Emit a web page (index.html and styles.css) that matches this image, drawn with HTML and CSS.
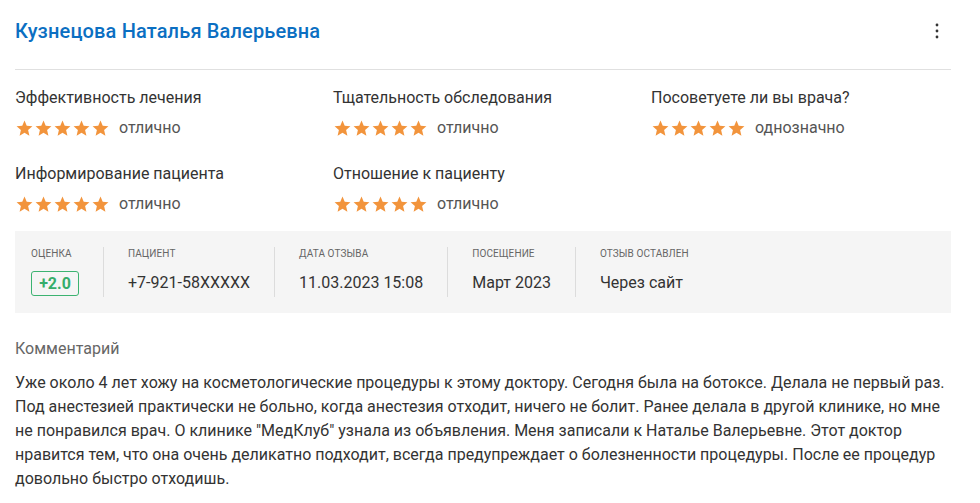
FILE: index.html
```html
<!DOCTYPE html>
<html lang="ru">
<head>
  <meta charset="utf-8">
  <title>Отзыв о враче</title>
  <link rel="stylesheet" href="styles.css">
</head>
<body>
  <svg width="0" height="0" class="defs">
    <defs>
      <symbol id="star" viewBox="0 0 24 24">
        <path d="M12 17.27L18.18 21l-1.64-7.03L22 9.24l-7.19-.61L12 2 9.19 8.63 2 9.24l5.46 4.73L5.82 21z"/>
      </symbol>
    </defs>
  </svg>

  <div class="review">
    <div class="reviewHeader">
      <a class="doctorName" href="#">Кузнецова Наталья Валерьевна</a>
      <button class="menuButton" aria-label="Меню">
        <svg width="4" height="16" viewBox="0 0 4 16"><circle cx="2" cy="2" r="1.4"/><circle cx="2" cy="8" r="1.4"/><circle cx="2" cy="14" r="1.4"/></svg>
      </button>
    </div>

    <div class="ratings">
      <div class="rating">
        <div class="ratingLabel">Эффективность лечения</div>
        <div class="ratingValue">
          <span class="stars"><svg><use href="#star"/></svg><svg><use href="#star"/></svg><svg><use href="#star"/></svg><svg><use href="#star"/></svg><svg><use href="#star"/></svg></span>
          отлично
        </div>
      </div>
      <div class="rating">
        <div class="ratingLabel">Тщательность обследования</div>
        <div class="ratingValue">
          <span class="stars"><svg><use href="#star"/></svg><svg><use href="#star"/></svg><svg><use href="#star"/></svg><svg><use href="#star"/></svg><svg><use href="#star"/></svg></span>
          отлично
        </div>
      </div>
      <div class="rating">
        <div class="ratingLabel">Посоветуете ли вы врача?</div>
        <div class="ratingValue">
          <span class="stars"><svg><use href="#star"/></svg><svg><use href="#star"/></svg><svg><use href="#star"/></svg><svg><use href="#star"/></svg><svg><use href="#star"/></svg></span>
          однозначно
        </div>
      </div>
      <div class="rating">
        <div class="ratingLabel">Информирование пациента</div>
        <div class="ratingValue">
          <span class="stars"><svg><use href="#star"/></svg><svg><use href="#star"/></svg><svg><use href="#star"/></svg><svg><use href="#star"/></svg><svg><use href="#star"/></svg></span>
          отлично
        </div>
      </div>
      <div class="rating">
        <div class="ratingLabel">Отношение к пациенту</div>
        <div class="ratingValue">
          <span class="stars"><svg><use href="#star"/></svg><svg><use href="#star"/></svg><svg><use href="#star"/></svg><svg><use href="#star"/></svg><svg><use href="#star"/></svg></span>
          отлично
        </div>
      </div>
    </div>

    <div class="details">
      <div class="detail">
        <div class="detailLabel">Оценка</div>
        <div class="score">+2.0</div>
      </div>
      <div class="detail">
        <div class="detailLabel">Пациент</div>
        <div class="detailValue">+7-921-58XXXXX</div>
      </div>
      <div class="detail">
        <div class="detailLabel">Дата отзыва</div>
        <div class="detailValue">11.03.2023 15:08</div>
      </div>
      <div class="detail">
        <div class="detailLabel">Посещение</div>
        <div class="detailValue">Март 2023</div>
      </div>
      <div class="detail">
        <div class="detailLabel">Отзыв оставлен</div>
        <div class="detailValue">Через сайт</div>
      </div>
    </div>

    <div class="commentLabel">Комментарий</div>
    <p class="commentText">Уже около 4 лет хожу на косметологические процедуры к этому доктору. Сегодня была на ботоксе. Делала не первый раз. Под анестезией практически не больно, когда анестезия отходит, ничего не болит. Ранее делала в другой клинике, но мне не понравился врач. О клинике "МедКлуб" узнала из объявления. Меня записали к Наталье Валерьевне. Этот доктор нравится тем, что она очень деликатно подходит, всегда предупреждает о болезненности процедуры. После ее процедур довольно быстро отходишь.</p>
  </div>
</body>
</html>
```

FILE: styles.css
```css
body {
  background-color: white;
  color: #333;
  font-family: Roboto, "Noto Sans", Arial, sans-serif;
  font-size: 16px;
  margin: 0;
  padding: 0;
}

.defs {
  position: absolute;
}

.review {
  padding: 0 29px 0 15px;
}

.reviewHeader {
  align-items: center;
  border-bottom: 1px solid #e0e0e0;
  box-sizing: border-box;
  display: flex;
  height: 70px;
  justify-content: space-between;
  padding-bottom: 8px;
}

.doctorName {
  color: #0b6fc2;
  font-size: 20px;
  font-weight: 500;
  letter-spacing: 0.15px;
  text-decoration: none;
}

.menuButton {
  background: none;
  border: 0;
  cursor: pointer;
  display: flex;
  padding: 0 12px;
}

.menuButton svg {
  fill: #333;
}

.ratings {
  column-gap: 18px;
  display: grid;
  grid-template-columns: repeat(3, 1fr);
  padding-top: 18px;
  row-gap: 26px;
}

.ratingLabel {
  line-height: 20px;
}

.ratingValue {
  align-items: center;
  color: #555;
  display: flex;
  line-height: 20px;
  margin-top: 10px;
}

.stars {
  display: flex;
  margin-right: 9px;
}

.stars svg {
  fill: #f2943c;
  height: 19px;
  width: 19px;
}

.details {
  background-color: #f5f5f5;
  display: flex;
  margin-top: 17px;
  padding: 16px;
}

.detail {
  border-right: 1px solid #dcdcdc;
  height: 50px;
  padding: 0 24px;
}

.detail:first-child {
  padding-left: 0;
}

.detail:last-child {
  border-right: 0;
}

.detailLabel {
  color: #666;
  font-size: 10px;
  letter-spacing: 0.1px;
  line-height: 14px;
  text-transform: uppercase;
}

.detailValue {
  font-size: 16px;
  line-height: 20px;
  margin-top: 12px;
}

.score {
  border: 1px solid #3cb371;
  border-radius: 3px;
  color: #36ad6a;
  font-size: 16px;
  font-weight: 700;
  line-height: 23px;
  margin-top: 10px;
  text-align: center;
  width: 46px;
}

.commentLabel {
  color: #666;
  line-height: 20px;
  margin-top: 26px;
}

.commentText {
  line-height: 24px;
  margin: 12px 0 0;
}
```
